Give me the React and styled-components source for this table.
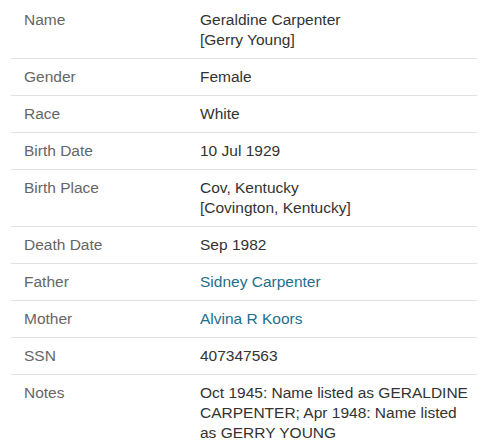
import React from "react";
import styled, { createGlobalStyle } from "styled-components";

const GlobalStyle = createGlobalStyle`
  body {
    margin: 0;
    background: #fff;
    font-family: "Liberation Sans", Arial, sans-serif;
  }
`;

const Table = styled.div`
  width: 466px;
  margin-left: 11px;
  padding-top: 2px;
`;

const Row = styled.div`
  display: grid;
  grid-template-columns: 176px 1fr;
  padding: 8px 0 8px 13px;
  border-bottom: 1px solid #e1e1e1;
  font-size: 15.5px;
  line-height: 20px;
  &:last-child {
    border-bottom: none;
  }
`;

const Label = styled.div`
  color: #666;
`;

const Value = styled.div`
  color: #333;
`;

const PersonLink = styled.a`
  color: #1f6f8b;
  text-decoration: none;
`;

const rows = [
  { label: "Name", value: ["Geraldine Carpenter", "[Gerry Young]"] },
  { label: "Gender", value: ["Female"] },
  { label: "Race", value: ["White"] },
  { label: "Birth Date", value: ["10 Jul 1929"] },
  { label: "Birth Place", value: ["Cov, Kentucky", "[Covington, Kentucky]"] },
  { label: "Death Date", value: ["Sep 1982"] },
  { label: "Father", link: "Sidney Carpenter" },
  { label: "Mother", link: "Alvina R Koors" },
  { label: "SSN", value: ["407347563"] },
  {
    label: "Notes",
    value: [
      "Oct 1945: Name listed as GERALDINE",
      "CARPENTER; Apr 1948: Name listed",
      "as GERRY YOUNG",
    ],
  },
];

const App = () => {
  return (
    <>
      <GlobalStyle />
      <Table>
        {rows.map((row) => (
          <Row key={row.label}>
            <Label>{row.label}</Label>
            <Value>
              {row.link ? (
                <PersonLink href="#">{row.link}</PersonLink>
              ) : (
                row.value.map((line, i) => <div key={i}>{line}</div>)
              )}
            </Value>
          </Row>
        ))}
      </Table>
    </>
  );
};

export default App;
